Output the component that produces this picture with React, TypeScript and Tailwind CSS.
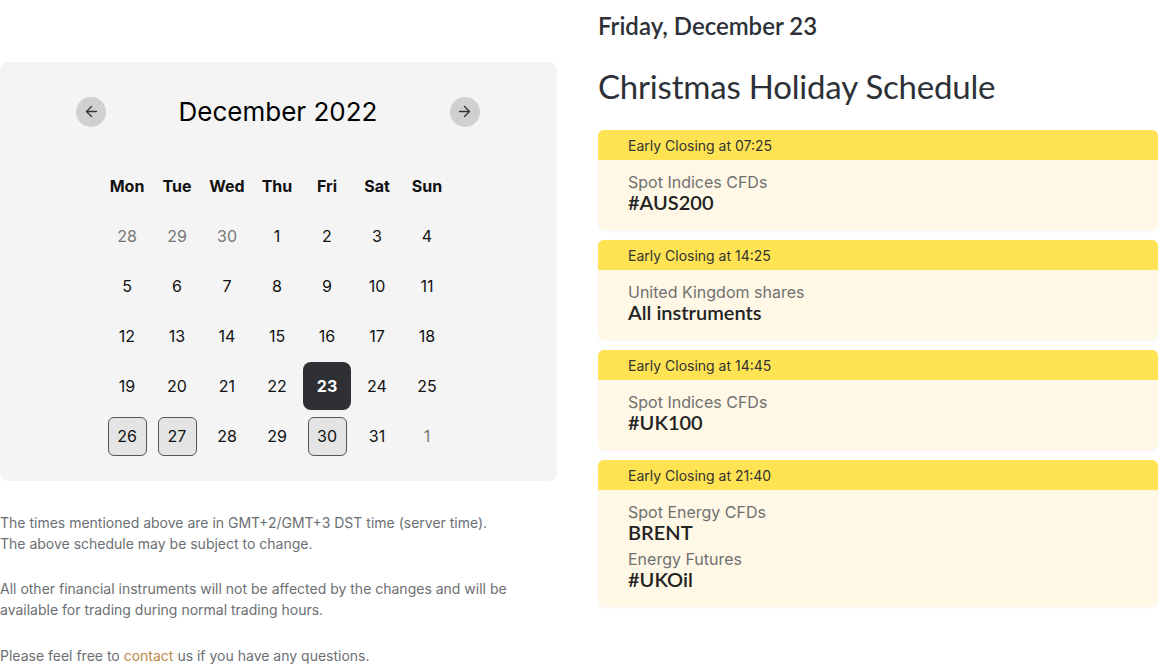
import { ArrowLeft, ArrowRight } from 'lucide-react'

const weekdays = ['Mon', 'Tue', 'Wed', 'Thu', 'Fri', 'Sat', 'Sun']

type Day = { n: number; muted?: boolean; selected?: boolean; holiday?: boolean }

const days: Day[] = [
  { n: 28, muted: true },
  { n: 29, muted: true },
  { n: 30, muted: true },
  ...Array.from({ length: 31 }, (_, i) => ({
    n: i + 1,
    selected: i + 1 === 23,
    holiday: [26, 27, 30].includes(i + 1),
  })),
  { n: 1, muted: true },
]

const schedule = [
  { time: '07:25', items: [{ group: 'Spot Indices CFDs', name: '#AUS200' }] },
  { time: '14:25', items: [{ group: 'United Kingdom shares', name: 'All instruments' }] },
  { time: '14:45', items: [{ group: 'Spot Indices CFDs', name: '#UK100' }] },
  {
    time: '21:40',
    items: [
      { group: 'Spot Energy CFDs', name: 'BRENT' },
      { group: 'Energy Futures', name: '#UKOil' },
    ],
  },
]

const heading = { fontFamily: 'Lato, "Noto Sans", sans-serif' }

function DayCell({ day }: { day: Day }) {
  let cls = 'text-[#111]'
  if (day.muted) cls = 'text-[#777]'
  if (day.selected) cls = 'w-12 h-12 rounded-lg bg-[#2e3033] text-white font-bold'
  if (day.holiday) cls = 'w-[39px] h-[39px] rounded-md bg-[#e4e4e4] border border-[#555] text-[#111]'
  return (
    <div className="h-[50px] flex items-center justify-center">
      <div className={`flex items-center justify-center ${cls}`}>{day.n}</div>
    </div>
  )
}

function Calendar() {
  return (
    <div className="w-[557px] h-[419px] bg-[#f4f4f4] rounded-lg pt-[30px]">
      <div className="flex items-center justify-between pl-[76px] pr-[77px]">
        <button className="w-[30px] h-[30px] rounded-full bg-[#d0d0d0] flex items-center justify-center text-[#333]">
          <ArrowLeft size={17} strokeWidth={1.8} />
        </button>
        <div className="text-[26px] text-black">December 2022</div>
        <button className="w-[30px] h-[30px] rounded-full bg-[#d0d0d0] flex items-center justify-center text-[#333]">
          <ArrowRight size={17} strokeWidth={1.8} />
        </button>
      </div>
      <div className="ml-[102px] w-[350px] mt-[30px] grid grid-cols-7 text-[16px]">
        {weekdays.map((w) => (
          <div key={w} className="h-[50px] flex items-center justify-center font-bold text-[#111]">
            {w}
          </div>
        ))}
        {days.map((d, i) => (
          <DayCell key={i} day={d} />
        ))}
      </div>
    </div>
  )
}

export default function App() {
  return (
    <div
      className="w-[1163px] h-[668px] bg-white flex overflow-hidden"
      style={{ fontFamily: 'Inter, "Noto Sans", sans-serif' }}
    >
      <div className="w-[598px] shrink-0 pt-[62px]">
        <Calendar />
        <div className="mt-[31px] text-[14px] leading-[21px] text-[#6b6f73]">
          <p>The times mentioned above are in GMT+2/GMT+3 DST time (server time).</p>
          <p>The above schedule may be subject to change.</p>
          <p className="mt-[24px] w-[520px]">
            All other financial instruments will not be affected by the changes and will be
            available for trading during normal trading hours.
          </p>
          <p className="mt-[25px]">
            Please feel free to <span className="text-[#b98a45]">contact</span> us if you have any
            questions.
          </p>
        </div>
      </div>
      <div className="w-[560px] shrink-0">
        <div className="pt-[10px] text-[24px] leading-[32px] font-semibold text-[#2d3137]" style={heading}>
          Friday, December 23
        </div>
        <h1
          className="mt-[24px] text-[33px] leading-[40px] font-normal tracking-[-0.2px] text-[#2d3137]"
          style={heading}
        >
          Christmas Holiday Schedule
        </h1>
        <div className="mt-[24px] flex flex-col gap-[10px]">
          {schedule.map((s) => (
            <div key={s.time} className="rounded-md overflow-hidden bg-[#fff8e6] shadow-[0_1px_3px_rgba(0,0,0,0.04)]">
              <div className="h-[30px] bg-[#ffe352] pl-[30px] flex items-center text-[14px] text-[#333]">
                Early Closing at {s.time}
              </div>
              <div className="pl-[30px] pt-[12px] pb-[18px] flex flex-col gap-[7px]">
                {s.items.map((it) => (
                  <div key={it.name}>
                    <div className="text-[16px] leading-[20px] text-[#707070]">{it.group}</div>
                    <div className="text-[20px] leading-[20px] font-semibold text-[#222]" style={heading}>
                      {it.name}
                    </div>
                  </div>
                ))}
              </div>
            </div>
          ))}
        </div>
      </div>
    </div>
  )
}
